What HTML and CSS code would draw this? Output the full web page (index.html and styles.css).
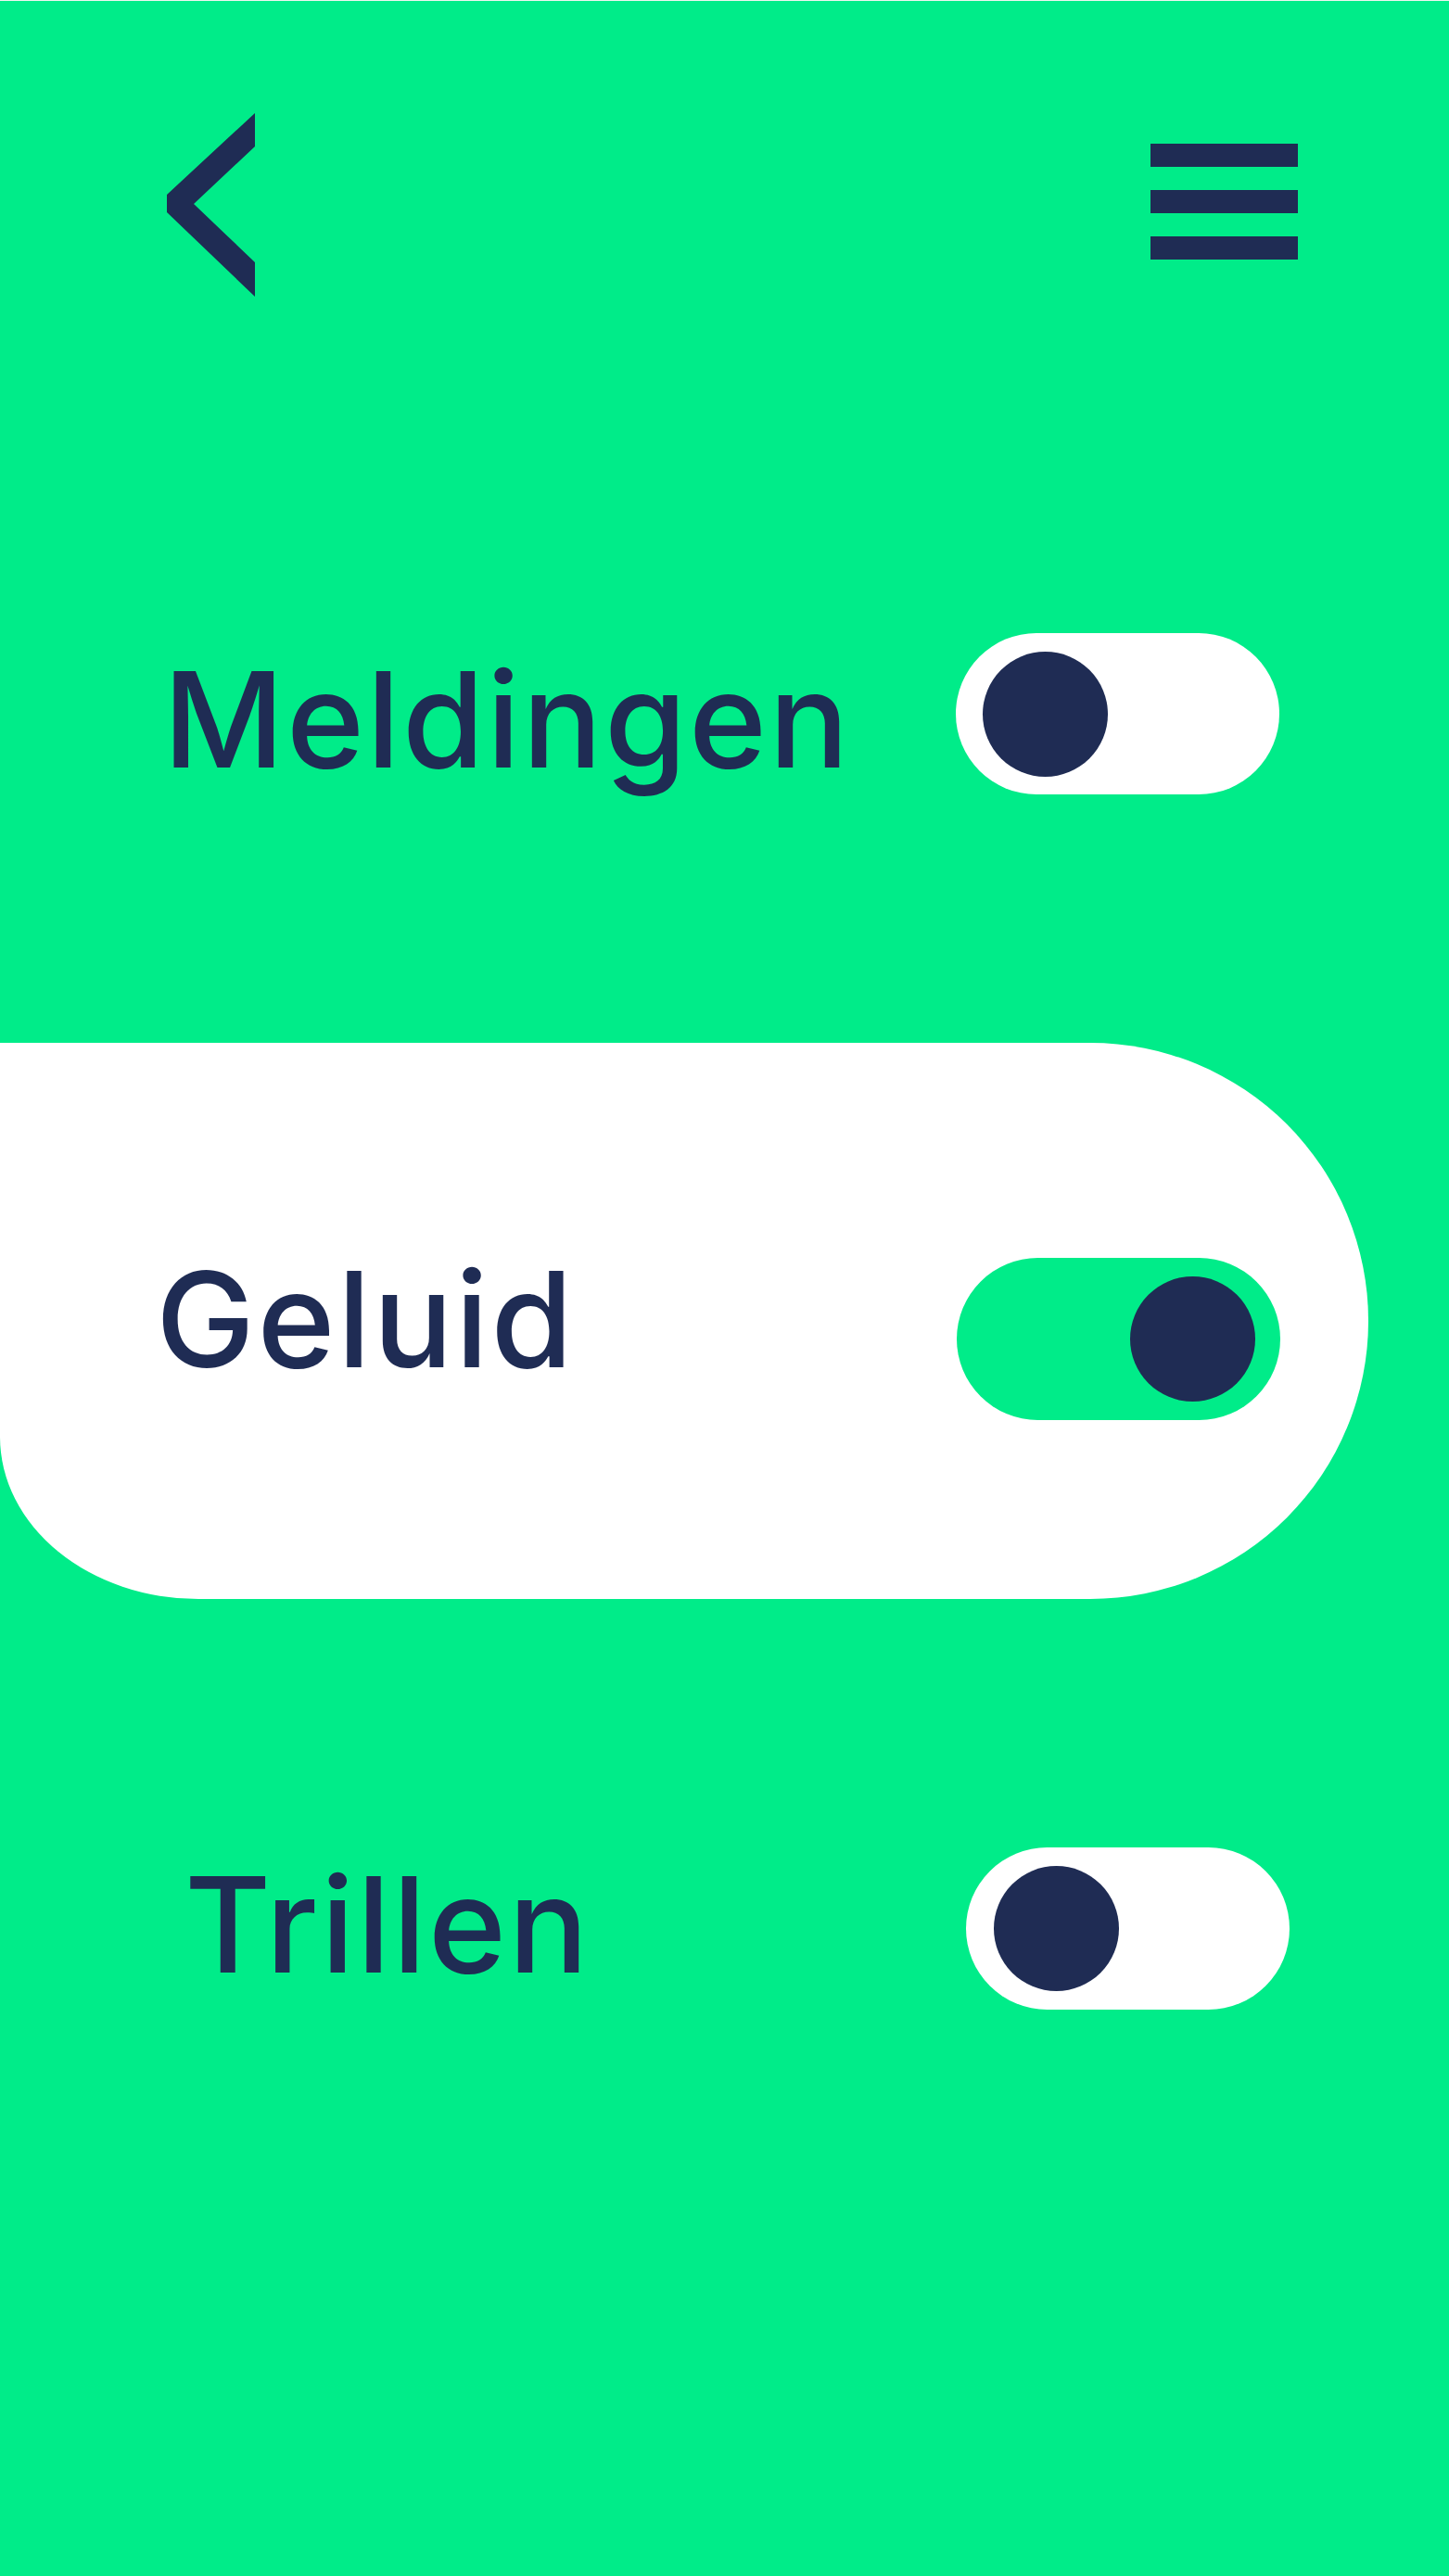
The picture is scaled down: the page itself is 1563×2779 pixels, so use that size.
FILE: index.html
```
<!DOCTYPE html>
<html lang="nl">
<head>
<meta charset="utf-8">
<title>Instellingen</title>
<link rel="stylesheet" href="styles.css">
</head>
<body>
<div class="screen">
  <header class="topbar">
    <button class="icon-btn back" aria-label="Terug">
      <svg width="95" height="198" viewBox="0 0 95 198"><polygon points="95,0 95,36 29,98 95,161 95,198 0,107 0,88" fill="#1f2c54"/></svg>
    </button>
    <button class="icon-btn menu" aria-label="Menu">
      <span class="bar"></span><span class="bar"></span><span class="bar"></span>
    </button>
  </header>

  <div class="row row-meldingen">
    <span class="label">Meldingen</span>
    <span class="toggle"><span class="knob"></span></span>
  </div>

  <div class="panel">
    <div class="row row-geluid">
      <span class="label">Geluid</span>
      <span class="toggle on"><span class="knob"></span></span>
    </div>
  </div>

  <div class="row row-trillen">
    <span class="label">Trillen</span>
    <span class="toggle"><span class="knob"></span></span>
  </div>
</div>
</body>
</html>
```

FILE: styles.css
```
html, body {
  margin: 0;
  padding: 0;
}
body {
  background: #00ec89;
  font-family: "Inter", "Lato", sans-serif;
  color: #1f2c54;
}
.screen {
  width: 1563px;
  min-height: 2778px;
  border-top: 1px solid #eef6f1;
  background: #00ec89;
}
.topbar {
  display: flex;
  justify-content: space-between;
  align-items: flex-start;
  padding: 121px 163px 0 180px;
  height: 198px;
}
.icon-btn {
  border: 0;
  background: none;
  padding: 0;
  margin: 0;
  display: block;
}
.back svg { display: block; }
.menu {
  display: flex;
  flex-direction: column;
  gap: 25px;
  margin-top: 33px;
}
.bar {
  display: block;
  width: 159px;
  height: 25px;
  background: #1f2c54;
}
.row {
  display: flex;
  align-items: center;
}
.label {
  flex: 1;
  font-size: 143px;
  line-height: 143px;
  font-weight: 500;
  letter-spacing: 2.5px;
  white-space: nowrap;
}
.toggle {
  width: 349px;
  height: 175px;
  border-radius: 88px;
  background: #ffffff;
  display: flex;
  align-items: center;
  padding: 0 28px;
  box-sizing: border-box;
  flex: none;
}
.toggle.on {
  background: #00ec89;
  justify-content: flex-end;
  padding: 0 27px;
}
.knob {
  width: 135px;
  height: 135px;
  border-radius: 50%;
  background: #1f2c54;
}
.row-meldingen {
  margin-top: 363px;
  height: 174px;
  padding-left: 176px;
  padding-right: 183px;
}
.row-meldingen .label { margin-top: 10px; }
.row-meldingen .toggle { height: 174px; padding-left: 29px; }
.panel {
  margin-top: 268px;
  width: 1476px;
  height: 600px;
  box-sizing: border-box;
  padding-top: 232px;
  background: #ffffff;
  border-radius: 0 300px 300px 214px / 0 300px 300px 175px;
}
.row-geluid {
  height: 175px;
  padding-left: 168px;
  padding-right: 95px;
}
.row-geluid .label { margin-bottom: 45px; }
.row-trillen {
  margin-top: 268px;
  height: 175px;
  padding-left: 199px;
  padding-right: 172px;
}
.row-trillen .toggle { padding-left: 30px; }
.row-trillen .label { margin-bottom: 11px; }
```
